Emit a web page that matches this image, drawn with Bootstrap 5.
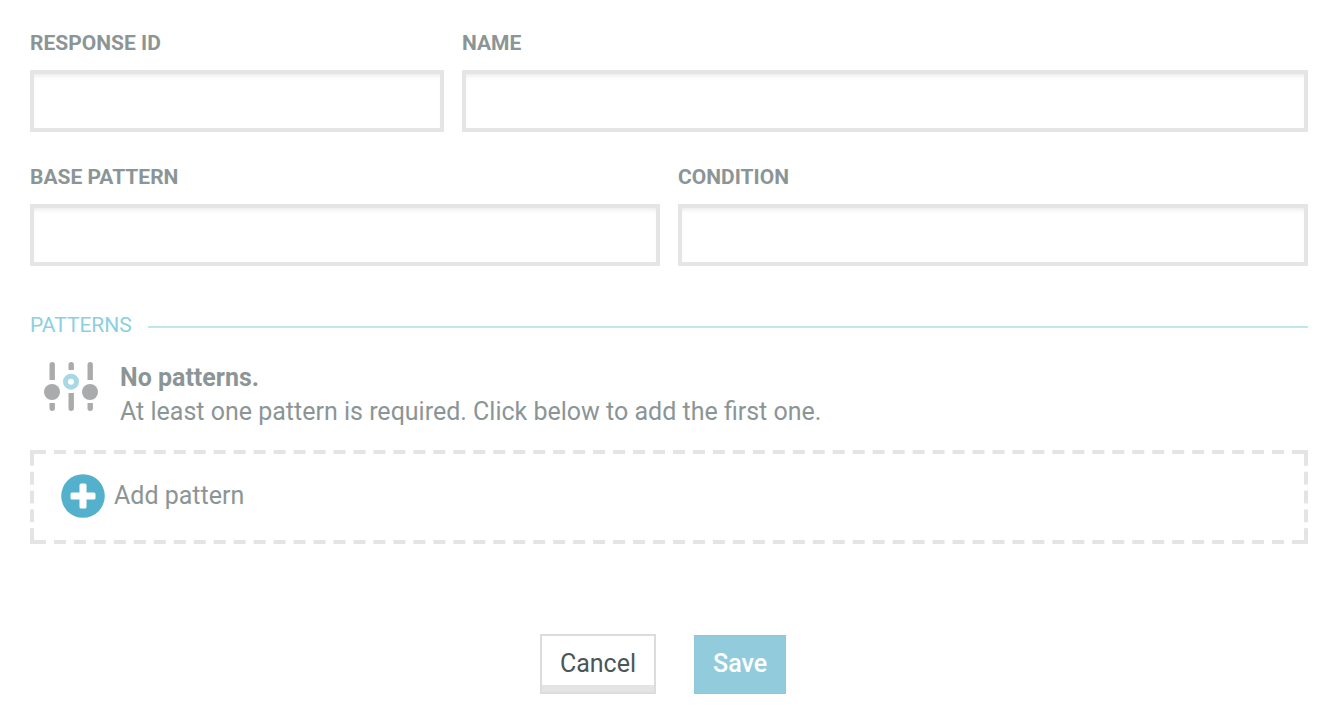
<!DOCTYPE html>
<html lang="en">
<head>
<meta charset="utf-8">
<meta name="viewport" content="width=device-width, initial-scale=1">
<title>Edit response</title>
<link href="https://cdn.jsdelivr.net/npm/bootstrap@5.3.0/dist/css/bootstrap.min.css" rel="stylesheet">
<style>
  body { font-family: Roboto, "Liberation Sans", sans-serif; font-size: 25px; line-height: 34px; color: #8c9596; background: #fff; }
  .response-form { padding: 27px 30px 34px; }
  .field-row { --bs-gutter-x: 18px; --bs-gutter-y: 29px; }
  .field-row .form-label { display: block; margin-bottom: 11px; font-size: 21px; font-weight: 700; line-height: 32px; text-transform: uppercase; }
  .field-row .form-control { height: 62px; border: 4px solid #e3e6e5; border-radius: 0; box-shadow: inset 0 4px 4px -2px rgba(0,0,0,.08); font-size: 25px; color: #4a5658; }
  .section-title { gap: 16px; margin-top: 43px; color: #8cd0e0; }
  .section-title h2 { font-size: 21px; font-weight: 400; line-height: 32px; }
  .section-title hr { border-top: 2px solid #bfe6ed; opacity: 1; margin-top: 3px !important; }
  .empty-note { gap: 20px; margin-top: 20px; padding-left: 12px; }
  .add-pattern { height: 94px; margin-top: 21px; padding: 0 30px 3px; gap: 8px; border: 0; color: inherit;
    --dash: #e4e4e4;
    --corner: linear-gradient(var(--dash), var(--dash));
    --dash-x: linear-gradient(90deg, transparent 20%, var(--dash) 20% 80%, transparent 80%);
    --dash-y: linear-gradient(transparent 18%, var(--dash) 18% 82%, transparent 82%);
    background:
      var(--corner) left top / 4px 4px no-repeat,
      var(--corner) right top / 4px 4px no-repeat,
      var(--corner) left bottom / 4px 4px no-repeat,
      var(--corner) right bottom / 4px 4px no-repeat,
      var(--dash-x) left top / 20px 4px round no-repeat,
      var(--dash-x) left bottom / 20px 4px round no-repeat,
      var(--dash-y) left top / 4px 19px no-repeat round,
      var(--dash-y) right top / 4px 19px no-repeat round; }
  .form-actions { gap: 38px; margin-top: 90px; padding-right: 12px; }
  .form-actions .btn { border-radius: 0; font-size: 25px; line-height: 34px; }
  .btn-cancel, .btn-cancel:hover { height: 60px; padding: 0 18px; border: 2px solid #d9dedd; background: #fff; color: #4a5658; box-shadow: inset 0 -7px #e4e4e4; }
  .btn-save, .btn-save:hover { height: 59px; padding: 0 18px 2px; border: 1px solid #8bc9da; background: #92ccdc; color: #fff; font-weight: 500 !important; }
</style>
</head>
<body>
<form class="response-form">
  <div class="row field-row">
    <div class="col-4">
      <label class="form-label" for="response-id">Response ID</label>
      <input class="form-control" type="text" id="response-id">
    </div>
    <div class="col-8">
      <label class="form-label" for="name">Name</label>
      <input class="form-control" type="text" id="name">
    </div>
    <div class="col-6">
      <label class="form-label" for="base-pattern">Base pattern</label>
      <input class="form-control" type="text" id="base-pattern">
    </div>
    <div class="col-6">
      <label class="form-label" for="condition">Condition</label>
      <input class="form-control" type="text" id="condition">
    </div>
  </div>

  <div class="section-title d-flex align-items-center">
    <h2 class="m-0">PATTERNS</h2>
    <hr class="flex-grow-1 m-0">
  </div>

  <div class="empty-note d-flex">
    <svg class="flex-shrink-0" width="58" height="52" viewBox="0 1 58 52" aria-hidden="true">
      <g fill="#a9abad">
        <path d="M7.500 20V4.800a2.700 2.700 0 0 1 5.400 0V20zM26.500 10V4.800a2.700 2.700 0 0 1 5.400 0V10zM45.500 20V4.800a2.700 2.700 0 0 1 5.400 0V20z"/>
        <path d="M7.500 43v5.200a2.700 2.700 0 0 0 5.400 0V43zM26.500 33v15.200a2.700 2.700 0 0 0 5.400 0V33zM45.500 43v5.200a2.700 2.700 0 0 0 5.400 0V43z"/>
        <circle cx="10" cy="32" r="8"/>
        <circle cx="48" cy="32" r="8"/>
      </g>
      <circle cx="29" cy="21.700" r="5.500" fill="none" stroke="#a8d8e6" stroke-width="5"/>
    </svg>
    <div>
      <strong class="d-block">No patterns.</strong>
      <span class="d-block">At least one pattern is required. Click below to add the first one.</span>
    </div>
  </div>

  <button type="button" class="add-pattern d-flex align-items-center w-100">
    <svg width="46" height="46" viewBox="0 0 46 46" aria-hidden="true">
      <circle cx="23" cy="23" r="21.800" fill="#54b1cb"/>
      <path d="M21 10.500h4a1.500 1.500 0 0 1 1.500 1.500v7.500H34a1.500 1.500 0 0 1 1.500 1.500v4a1.500 1.500 0 0 1-1.500 1.500h-7.500V34a1.500 1.500 0 0 1-1.500 1.500h-4a1.500 1.500 0 0 1-1.500-1.500v-7.500H12a1.500 1.500 0 0 1-1.500-1.500v-4a1.500 1.500 0 0 1 1.500-1.500h7.500V12a1.500 1.500 0 0 1 1.500-1.500z" fill="#fff"/>
    </svg>
    <span>Add pattern</span>
  </button>

  <div class="form-actions d-flex justify-content-center align-items-end">
    <button type="button" class="btn btn-cancel">Cancel</button>
    <button type="submit" class="btn btn-save">Save</button>
  </div>
</form>
<script src="https://cdn.jsdelivr.net/npm/bootstrap@5.3.0/dist/js/bootstrap.bundle.min.js"></script>
</body>
</html>
